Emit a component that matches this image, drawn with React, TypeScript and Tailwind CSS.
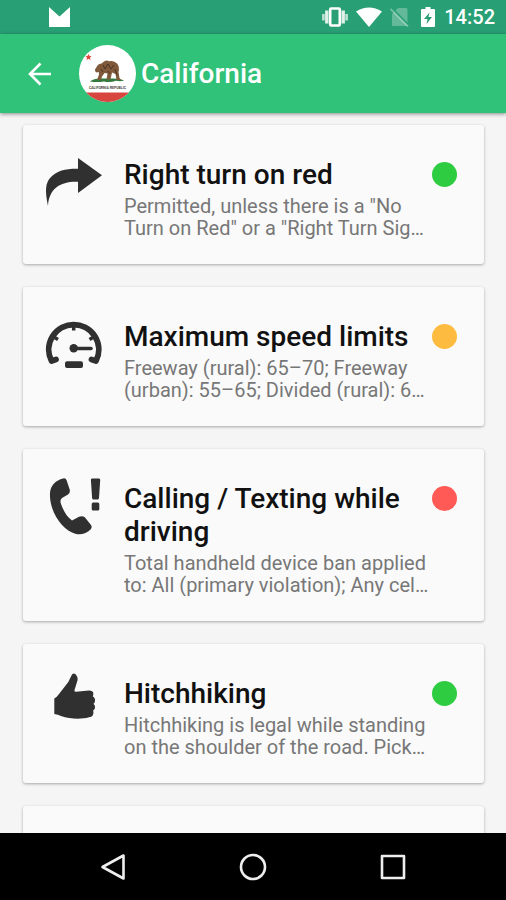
import type { ReactNode } from 'react';

const dots = {
  green: 'bg-[#2ecc40]',
  amber: 'bg-[#fdbc40]',
  red: 'bg-[#ff5a55]',
};

type Law = {
  title: string;
  summary: string;
  status: keyof typeof dots;
  icon: ReactNode;
};

const laws: Law[] = [
  {
    title: 'Right turn on red',
    summary: 'Permitted, unless there is a "No Turn on Red" or a "Right Turn Sig…',
    status: 'green',
    icon: <path d="M34 9L58 26.300L34 44V32.700C17 32 5 39 4 57C1 42 1 34 7 28C13 21.500 22 19.500 34 19.700Z" />,
  },
  {
    title: 'Maximum speed limits',
    summary: 'Freeway (rural): 65–70; Freeway (urban): 55–65; Divided (rural): 6…',
    status: 'amber',
    icon: (
      <>
        <path
          d="M12 48.500L7.500 50A25 25 0 1 1 52 50L47.500 48.500"
          fill="none"
          stroke="currentColor"
          strokeWidth="5.800"
          strokeLinecap="round"
          strokeLinejoin="round"
        />
        <path d="M29.700 12V19.500M9 25.500L14 28.500M50.500 25.500L45.500 28.500" fill="none" stroke="currentColor" strokeWidth="3.500" />
        <circle cx="29.700" cy="37.300" r="4.200" />
        <path d="M30 37.500H47" stroke="currentColor" strokeWidth="3.600" strokeLinecap="round" />
        <rect x="21" y="50.300" width="18" height="6.700" rx="2" />
      </>
    ),
  },
  {
    title: 'Calling / Texting while driving',
    summary: 'Total handheld device ban applied to: All (primary violation); Any cel…',
    status: 'red',
    icon: (
      <>
        <path d="M19 5.500Q21.500 4.500 22.500 7L25.700 16.500Q26.500 19.500 24 21.500L18 25Q15.500 27 17 31C19.500 38 23 44 28 47.500L35 43.800Q38.500 42.500 41 44.500L47 52Q48.500 54.500 46.500 56.500C43 60 38 62 32 61C17 57 5 37 6 20C6.500 12 12 7.500 19 5.500Z" />
        <path d="M48 5.500H55Q56.300 5.500 56.200 7L55 25Q54.800 26.500 53.500 26.500H49.500Q48.300 26.500 48.100 25L46.900 7Q46.800 5.500 48 5.500Z" />
        <rect x="47.700" y="29.500" width="7.600" height="7.900" rx="1.500" />
      </>
    ),
  },
  {
    title: 'Hitchhiking',
    summary: 'Hitchhiking is legal while standing on the shoulder of the road. Pick…',
    status: 'green',
    icon: (
      <path d="M28 6.500Q30.500 4 32.500 7.500Q34.500 10.500 33 14L30.500 22Q30 24 32 23.700L45 22.500Q49 22.500 49.300 25Q49.500 27 48.800 28.500Q51.500 30 51 33Q50.800 35 49.500 35.700Q51.500 37.500 51 40Q50.500 41.800 49.200 42.300Q50 45 48.700 47.500Q47.800 49 45 49.200C37 51.500 26 51 17 48Q14 46.500 10.300 46V30.500Q13 29 15 26L22 17Q24.500 14.500 26 10.500Z" />
    ),
  },
];

function StatusBar() {
  return (
    <div className="flex h-[34px] shrink-0 items-center bg-[#289f74] pr-[11px] pl-[49px] text-white">
      <svg width="21" height="20" viewBox="0 0 21 20" fill="currentColor" aria-hidden="true">
        <path d="M0 0L10.500 9.500L21 0V20H0Z" />
      </svg>
      <div className="ml-auto flex items-center">
        <svg width="26" height="20" viewBox="0 0 26 20" fill="none" stroke="currentColor" aria-label="Vibrate">
          <rect x="8.200" y="1.500" width="9.600" height="17" rx="1" strokeWidth="2.600" />
          <path d="M4.800 3.500V16.500M21.200 3.500V16.500" strokeWidth="3.400" strokeOpacity="0.85" />
          <path d="M1.400 7V13.500M24.600 7V13.500" strokeWidth="2.600" strokeOpacity="0.7" />
        </svg>
        <svg className="ml-2" width="26" height="20" viewBox="0 0 26 20" fill="currentColor" aria-label="Wi-Fi">
          <path d="M0 4.500Q13-3.500 26 4.500L13 20Z" />
        </svg>
        <svg className="ml-2" width="19" height="20" viewBox="0 0 19 20" aria-label="No SIM">
          <path d="M8 1H16Q17.500 1 17.500 2.500V19H3Q2 19 2 18V7Z" fill="currentColor" fillOpacity="0.28" />
          <path d="M2 1.500L19 18.500" stroke="#289f74" strokeWidth="2" />
          <path d="M0.500 2L18 19.500" stroke="currentColor" strokeOpacity="0.35" strokeWidth="1.800" />
        </svg>
        <svg className="ml-3" width="14" height="20" viewBox="0 0 14 20" aria-label="Battery charging">
          <path d="M4.500 0H9.500V2H13Q14 2 14 3V19Q14 20 13 20H1Q0 20 0 19V3Q0 2 1 2H4.500Z" fill="currentColor" />
          <path d="M8.500 5.500L3 12H6.500L5.500 17L11 10H7.500Z" fill="#289f74" />
        </svg>
        <time className="ml-[9px] text-[20px] leading-6 font-medium">14:52</time>
      </div>
    </div>
  );
}

function Flag() {
  return (
    <svg className="size-[57px] shrink-0 rounded-full bg-white" viewBox="0 0 57 57" role="img" aria-label="California flag">
      <rect y="47.500" width="57" height="10" fill="#d8453e" />
      <path d="M9.500 9L10.500 11L12.500 11.200L11 12.700L11.500 15L9.500 13.800L7.500 15L8 12.700L6.500 11.200L8.500 11Z" fill="#e0453f" />
      <path d="M11 36.500Q15 33 23 33.500H34Q42 33.500 45 35.800Q41 36.500 37 35.800Q31 38 25 36.500Q18 37.500 11 36.500Z" fill="#347a3f" />
      <path
        d="M16 24.500L18.500 20.500Q20 18.500 22.500 18.500L25 16.500Q28 14.500 30 16.300Q35 15 38 18.500Q41 22 39.500 27L40.500 33L42 35H37.500L36.500 29L33 27.500L31.500 34.500H27.500L28.500 28.500L25.500 28L23 31.500L22 35H18L20 29.500L19.800 27L17.500 27.500Q15.500 26.500 16 24.500Z"
        fill="#80593b"
      />
      <path d="M24 20L26 24L29 19L32 24L35 20M22 24L24 27M36 24L38 30M29 26L31 29" fill="none" stroke="#4b3425" strokeWidth="1" />
      <text
        x="28.500"
        y="43.500"
        textAnchor="middle"
        fontFamily="'Liberation Sans Narrow', Roboto, sans-serif"
        fontSize="3.500"
        fontWeight="700"
        fill="#4a4541"
      >
        CALIFORNIA REPUBLIC
      </text>
    </svg>
  );
}

function LawCard({ title, summary, status, icon }: Law) {
  return (
    <article className="flex items-start rounded-[3px] bg-[#fafafa] pt-[33px] pr-[27px] pb-[25px] pl-[21px] shadow-[0_1px_3px_rgba(0,0,0,0.32)]">
      <svg className="-mt-[9px] h-16 w-[60px] shrink-0 text-[#303030]" viewBox="0 0 60 64" fill="currentColor" aria-hidden="true">
        {icon}
      </svg>
      <div className="ml-5 min-w-0 flex-1">
        <h2 className="text-[28px] leading-[33px] font-medium text-[#111]">{title}</h2>
        <p className="mt-1 line-clamp-2 text-[20px] leading-[22px] text-[#777]">{summary}</p>
      </div>
      <span className={`mt-1 size-[25px] shrink-0 rounded-full ${dots[status]}`} />
    </article>
  );
}

export default function App() {
  return (
    <div className="flex h-screen flex-col overflow-hidden bg-[#f5f5f5] font-['Roboto',sans-serif]">
      <StatusBar />
      <header className="z-10 flex h-[79px] shrink-0 items-center bg-[#31c27a] pl-[28px] text-white shadow-[0_1px_4px_rgba(0,0,0,0.45)]">
        <button type="button" aria-label="Back">
          <svg width="24" height="24" viewBox="0 0 24 24" fill="none" stroke="currentColor" strokeWidth="2.600">
            <path d="M12.500 1.500L2 12L12.500 22.500M2 12H23" />
          </svg>
        </button>
        <div className="ml-[27px] flex items-center gap-[5px]">
          <Flag />
          <h1 className="text-[28px] leading-8 font-medium">California</h1>
        </div>
      </header>

      <main className="flex min-h-0 flex-1 flex-col gap-[23px] overflow-hidden pt-3 pr-[22px] pl-[23px] *:shrink-0">
        {laws.map((law) => (
          <LawCard key={law.title} {...law} />
        ))}
        <div className="h-16 rounded-[3px] bg-[#fafafa] shadow-[0_1px_3px_rgba(0,0,0,0.32)]" />
      </main>

      <nav className="grid h-[67px] shrink-0 grid-cols-3 items-center bg-black px-[43px] text-[#eee]">
        <button type="button" aria-label="Back" className="flex justify-center">
          <svg width="28" height="28" viewBox="0 0 28 28" fill="none" stroke="currentColor" strokeWidth="2.600" strokeLinejoin="round">
            <path d="M24.500 2.500V25.500L3.500 14Z" />
          </svg>
        </button>
        <button type="button" aria-label="Home" className="flex justify-center">
          <svg width="28" height="28" viewBox="0 0 28 28" fill="none" stroke="currentColor" strokeWidth="2.600">
            <circle cx="14" cy="14" r="12" />
          </svg>
        </button>
        <button type="button" aria-label="Recent apps" className="flex justify-center">
          <svg width="28" height="28" viewBox="0 0 28 28" fill="none" stroke="currentColor" strokeWidth="2.600" strokeLinejoin="round">
            <rect x="3" y="3" width="22" height="22" />
          </svg>
        </button>
      </nav>
    </div>
  );
}
